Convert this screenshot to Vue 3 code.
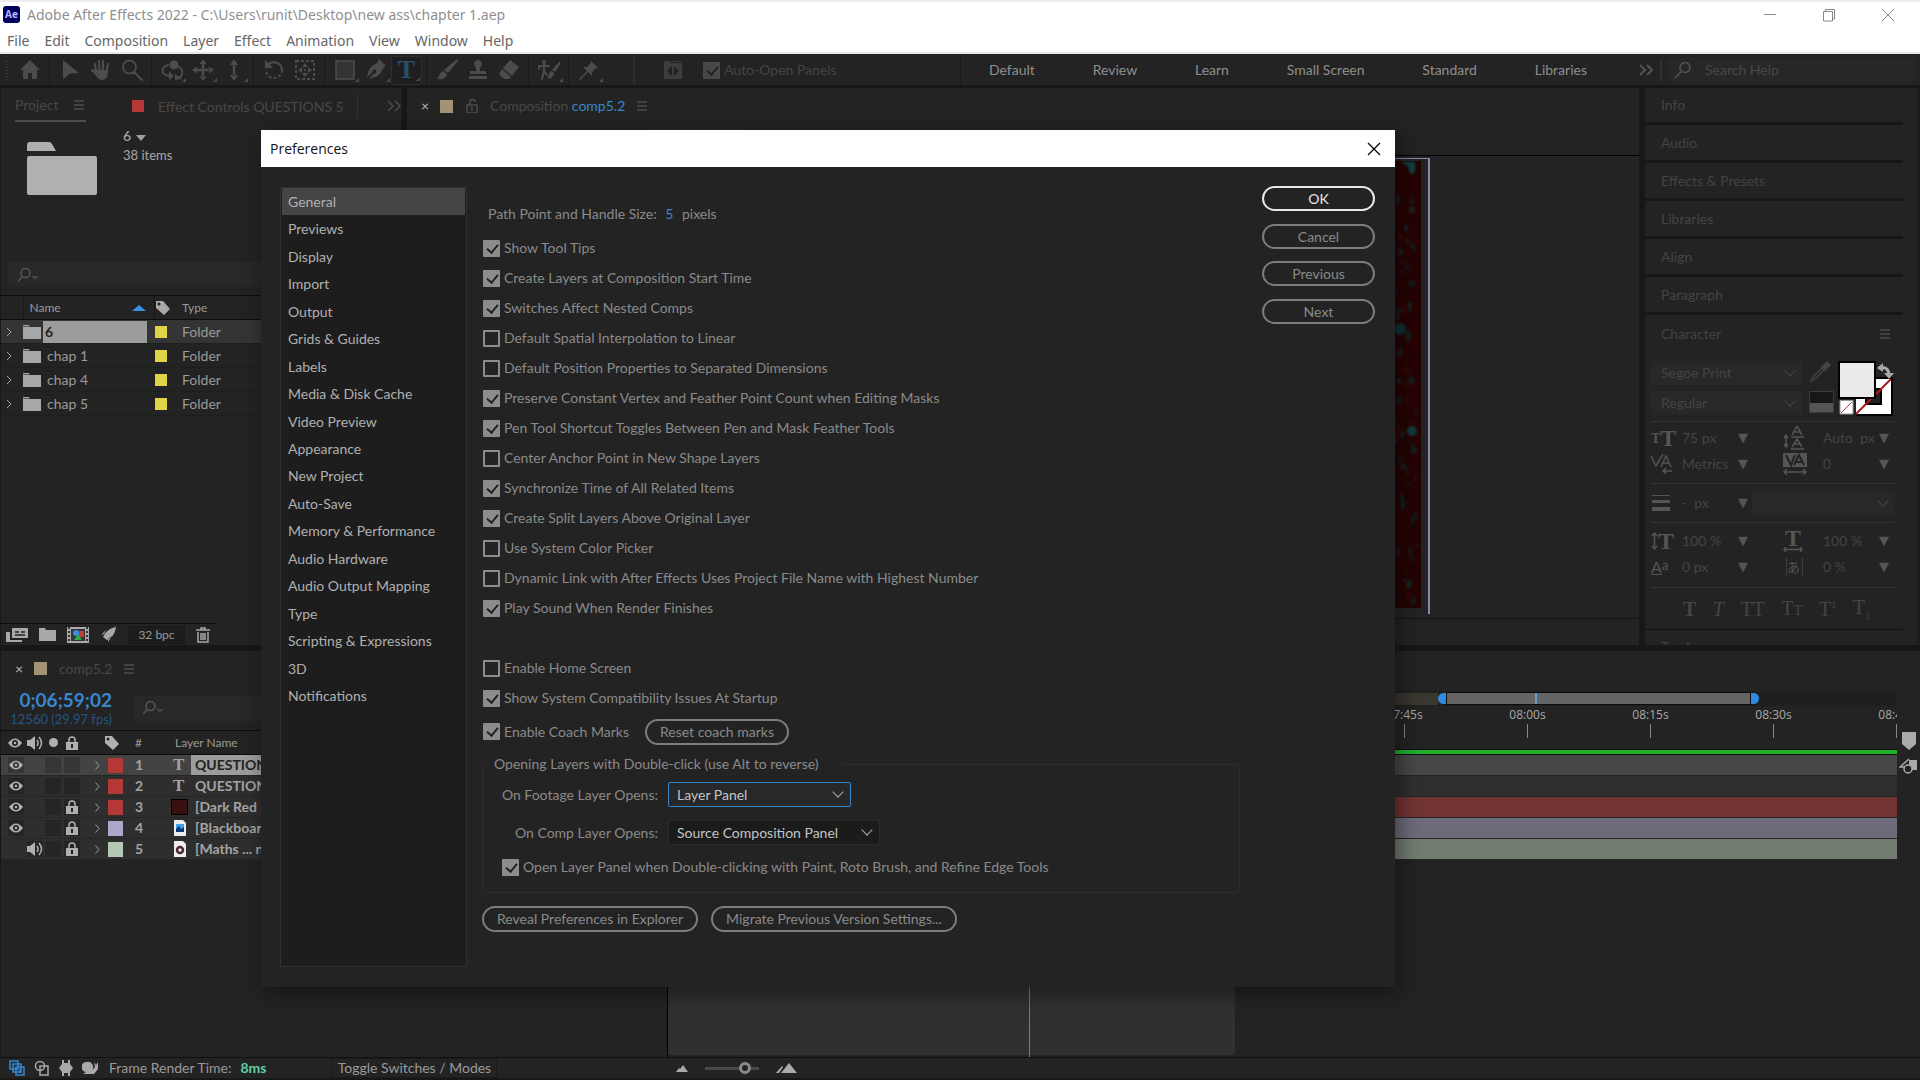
<script setup>
import { ref } from 'vue'

const menus = ['File', 'Edit', 'Composition', 'Layer', 'Effect', 'Animation', 'View', 'Window', 'Help']

const toolGroups = [
  [{ name: 'Home', f: 'M11 1L21 11H18V20H13V14H9V20H4V11H1Z' }],
  [
    { name: 'Selection', f: 'M4 1L20 14L11 14.5L4 20.5Z' },
    { name: 'Hand', f: 'M5 11H18V14C18 18 15.5 21 12 21C8.5 21 7 18 2.5 12L5 11Z', s: 'M6 13L5 5M9.5 12L9 2M13 12V2M16.5 13L18 5M2 11L7 16', w: 2.2 },
    { name: 'Zoom', s: 'M15 8A6.5 6.5 0 1 1 2 8A6.5 6.5 0 1 1 15 8M13 13L21 21', w: 1.8 },
  ],
  [
    { name: 'Orbit Camera', more: 1, f: 'M13 1.5A4.5 4.5 0 1 1 13 10.5A4.5 4.5 0 1 1 13 1.5M8 12L13 17L8 21ZM14 15L21 20L14 21Z', s: 'M7 6C0 8 0 14 5 16L9 17M18 8C23 11 22 16 18 19', w: 2 },
    { name: 'Pan Camera', more: 1, f: 'M11 0L14.5 5H7.5ZM11 22L14.5 17H7.5ZM0 11L5 7.5V14.5ZM22 11L17 7.5V14.5ZM9.8 4H12.2V18H9.8ZM4 9.8H18V12.2H4Z' },
    { name: 'Dolly Camera', more: 1, f: 'M11 0L15 6H7ZM11 22L15 16H7ZM9.8 5H12.2V17H9.8Z' },
  ],
  [
    { name: 'Rotation', f: 'M2 1V9H10Z', s: 'M5 6A8 8 0 0 1 19 11', w: 2.2, d: 'M19 11A8 8 0 1 1 3 11' },
    { name: 'Pan Behind', f: 'M11 4L14 8H8ZM11 18L14 14H8ZM4 11L8 8V14ZM18 11L14 8V14ZM10 10H12V12H10Z', d: 'M2 2H20V20H2Z' },
  ],
  [
    { name: 'Rectangle', more: 1, f: 'M2 2H20V20H2Z', box: 1 },
    { name: 'Pen', more: 1, f: 'M14 0L21 7L18 8L19 9L17 11C16 16 11 18 4 20L9 14.5A2 2 0 1 0 7.5 13L2 18.5C3 11 6 6 11 5L13 3Z' },
    { name: 'Type', more: 1, text: 'T' },
  ],
  [
    { name: 'Brush', f: 'M21 0L22 2L12 14L8 11ZM7 12L11 15C11 19 6 21 1 20C4 18 3 13 7 12Z' },
    { name: 'Clone Stamp', f: 'M11 1A4 4 0 0 1 14 7.5C12.5 9 13 11 13 12H19V15H3V12H9C9 11 9.5 9 8 7.5A4 4 0 0 1 11 1ZM2 17H20V20H2Z' },
    { name: 'Eraser', f: 'M12 1L21 8L14 17L5 9ZM4 10L13 18L11 20H6L1 15Z' },
  ],
  [{ name: 'Roto Brush', more: 1, f: 'M6 1A2 2 0 1 1 6 5A2 2 0 1 1 6 1M22 2L23 4L17 13L14 11ZM13 12L16 14C16 18 12 20 9 19C11 17 11 13 13 12Z', s: 'M6 5V12L4 20M6 12L9 16M1 10V7H11', w: 2 }],
  [{ name: 'Puppet Pin', more: 1, f: 'M13 2L20 9L17 10L14 13V17L10 13L2 21L1 20L9 12L5 8H9L12 5Z' }],
]

const workspaces = ['Default', 'Review', 'Learn', 'Small Screen', 'Standard', 'Libraries']
const panels = ['Info', 'Audio', 'Effects & Presets', 'Libraries', 'Align', 'Paragraph']
const folders = ['6', 'chap 1', 'chap 4', 'chap 5']

const layers = [
  { name: 'QUESTIONS 5', eye: 1, color: '#b63836', kind: 'T' },
  { name: 'QUESTIONS 4', eye: 1, color: '#b63836', kind: 'T' },
  { name: '[Dark Red Solid 1]', eye: 1, lock: 1, color: '#b63836', kind: 'solid' },
  { name: '[Blackboard.jpg]', eye: 1, lock: 1, color: '#aba8cb', kind: 'image' },
  { name: '[Maths ... n.mp3]', audio: 1, lock: 1, color: '#b4c9b5', kind: 'audio' },
]

const bars = ['#474747', '#2f2f2f', '#723333', '#6d6a7a', '#717b70']
const ticks = ['07:45s', '08:00s', '08:15s', '08:30s', '08:45s']

const categories = ['General', 'Previews', 'Display', 'Import', 'Output', 'Grids & Guides', 'Labels', 'Media & Disk Cache',
  'Video Preview', 'Appearance', 'New Project', 'Auto-Save', 'Memory & Performance', 'Audio Hardware',
  'Audio Output Mapping', 'Type', 'Scripting & Expressions', '3D', 'Notifications']
const current = ref('General')

const options = ref([
  { label: 'Show Tool Tips', on: true },
  { label: 'Create Layers at Composition Start Time', on: true },
  { label: 'Switches Affect Nested Comps', on: true },
  { label: 'Default Spatial Interpolation to Linear', on: false },
  { label: 'Default Position Properties to Separated Dimensions', on: false },
  { label: 'Preserve Constant Vertex and Feather Point Count when Editing Masks', on: true },
  { label: 'Pen Tool Shortcut Toggles Between Pen and Mask Feather Tools', on: true },
  { label: 'Center Anchor Point in New Shape Layers', on: false },
  { label: 'Synchronize Time of All Related Items', on: true },
  { label: 'Create Split Layers Above Original Layer', on: true },
  { label: 'Use System Color Picker', on: false },
  { label: 'Dynamic Link with After Effects Uses Project File Name with Highest Number', on: false },
  { label: 'Play Sound When Render Finishes', on: true },
])
const startup = ref([
  { label: 'Enable Home Screen', on: false },
  { label: 'Show System Compatibility Issues At Startup', on: true },
])
const coach = ref(true)
const openLayer = ref(true)
const autoOpen = ref(true)

// Mottled texture of the footage in the viewer
let seed = 7
const rnd = () => (seed = (seed * 16807) % 2147483647) / 2147483647
const specks = Array.from({ length: 130 }, () => ({
  x: Math.floor(rnd() * 29), y: Math.floor(rnd() * 440), w: 3 + Math.floor(rnd() * 4), h: 3 + Math.floor(rnd() * 7),
  c: ['#0d2f30', '#1c1414', '#102426', '#3a0808', '#0d3335', '#1a0505'][Math.floor(rnd() * 6)],
}))
</script>

<template>
  <div class="app">
    <header class="window-head">
      <div class="title">
        <span class="logo">Ae</span>
        <span class="title-text">Adobe After Effects 2022 - C:\Users\runit\Desktop\new ass\chapter 1.aep</span>
        <div class="win-buttons">
          <button aria-label="Minimize"><svg width="14" height="14" viewBox="0 0 14 14"><path d="M1 6.5H13" /></svg></button>
          <button aria-label="Restore"><svg width="14" height="14" viewBox="0 0 14 14"><path d="M1.5 3.5H10.5V13H1.5ZM3.500 3.500V1.5H12.5V11H10.5" /></svg></button>
          <button aria-label="Close"><svg width="14" height="14" viewBox="0 0 14 14"><path d="M1 1L13 13M13 1L1 13" /></svg></button>
        </div>
      </div>
      <nav class="menu"><a v-for="m in menus" :key="m" href="#">{{ m }}</a></nav>
    </header>

    <div class="toolbar">
      <div class="tools">
        <i class="grip"></i>
        <div v-for="(g, i) in toolGroups" :key="i" class="group">
          <button v-for="t in g" :key="t.name" :aria-label="t.name" :class="['tool', { more: t.more, active: t.text }]">
            <span v-if="t.text" class="tool-t">{{ t.text }}</span>
            <svg v-else width="22" height="22" viewBox="0 0 22 22">
              <path v-if="t.f" :d="t.f" :class="t.box ? 'boxed' : 'fill'" />
              <path v-if="t.s" :d="t.s" class="line" :stroke-width="t.w" />
              <path v-if="t.d" :d="t.d" class="dash" />
            </svg>
          </button>
        </div>
      </div>
      <div class="snap">
        <svg width="20" height="20" viewBox="0 0 20 20"><path d="M1 1H8V3H19V19H1Z" fill="#3d3d3d" /><path d="M9 6V16L4 11ZM11 6V16L16 11Z" fill="#222" /><path d="M10 1.5H18" stroke="#3d3d3d" /></svg>
        <label class="check dim"><input v-model="autoOpen" type="checkbox" />Auto-Open Panels</label>
      </div>
      <nav class="workspaces"><a v-for="w in workspaces" :key="w" href="#">{{ w }}</a></nav>
      <button class="chevs" aria-label="More workspaces"><svg width="14" height="12" viewBox="0 0 14 12"><path d="M1 1L6 6L1 11M8 1L13 6L8 11" /></svg></button>
      <div class="search-help">
        <svg width="18" height="18" viewBox="0 0 18 18"><path d="M16 6.5A5 5 0 1 1 6 6.5A5 5 0 1 1 16 6.5M7 11L1 17" /></svg>
        <input type="text" placeholder="Search Help" aria-label="Search Help" />
      </div>
    </div>

    <main class="workspace">
      <section class="project">
        <div class="tabs">
          <span class="tab on">Project <svg width="10" height="10" viewBox="0 0 10 10"><path d="M0 1H10M0 5H10M0 9H10" /></svg></span>
          <i class="sw red"></i>
          <span class="tab fx">Effect Controls QUESTIONS 5</span>
          <button class="chevs" aria-label="More tabs"><svg width="14" height="12" viewBox="0 0 14 12"><path d="M1 1L6 6L1 11M8 1L13 6L8 11" /></svg></button>
        </div>
        <div class="info">
          <svg width="70" height="54" viewBox="0 0 70 54"><path d="M0 9V3Q0 0 3 0H22Q24 0 25 2L29 9ZM2 14H68Q70 14 70 16V51Q70 53 68 53H2Q0 53 0 51V16Q0 14 2 14" fill="#b0b0b0" /></svg>
          <div class="info-text"><b>6</b> <i class="tri"></i><br /><span>38 items</span></div>
        </div>
        <div class="filter"><svg width="22" height="14" viewBox="0 0 22 14"><path d="M12 5A4.5 4.5 0 1 1 3 5A4.5 4.5 0 1 1 12 5M4.500 8.5L0 13" /><path d="M13 8H21L17 12Z" class="solid" /></svg><input type="text" aria-label="Filter project" /></div>
        <table class="items">
          <colgroup><col class="c1" /><col class="c2" /><col class="c3" /><col /></colgroup>
          <thead>
            <tr><th></th><th>Name<svg class="sort" width="14" height="6" viewBox="0 0 14 6"><path d="M0 6L7 0L14 6Z" fill="#3a8fe0" /></svg></th><th><svg width="15" height="15" viewBox="0 0 15 15"><path fill-rule="evenodd" d="M1 1H8L15 9L9 15L1 8ZM4 2.5A1.5 1.5 0 1 0 4 5.5A1.5 1.5 0 1 0 4 2.5" fill="#a8a8a8" /></svg></th><th>Type</th></tr>
          </thead>
          <tbody>
            <tr v-for="(f, i) in folders" :key="f" :class="{ sel: !i }">
              <td><svg width="6" height="10" viewBox="0 0 6 10"><path d="M1 1L5 5L1 9" fill="none" stroke="#a0a0a0" /></svg></td>
              <td><div class="cell"><svg width="18" height="14" viewBox="0 0 18 14"><path d="M0 0H6L7 2H18V14H0Z" fill="#a8a8a8" /><path d="M0 1.5H7" stroke="#232323" stroke-width=".6" /></svg><span class="fname">{{ f }}</span></div></td>
              <td><i class="sw yellow"></i></td>
              <td class="ftype">Folder</td>
            </tr>
          </tbody>
        </table>
        <div class="project-foot">
          <button aria-label="Interpret Footage"><svg width="22" height="16" viewBox="0 0 22 16"><path d="M6 1H22V11H6ZM0 5H4V13H16V15H0Z" fill="#a8a8a8" /><path d="M9 5H13M9 8H19M15 5H19" stroke="#232323" stroke-width="1.5" /></svg></button>
          <button aria-label="New Folder"><svg width="17" height="14" viewBox="0 0 17 14"><path d="M0 0H6L7 2H17V13H0Z" fill="#a8a8a8" /></svg></button>
          <button aria-label="New Composition"><svg width="22" height="16" viewBox="0 0 22 16"><path d="M0 0H22V16H0Z" fill="#a8a8a8" /><path d="M2 0V16M20 0V16" stroke="#333" stroke-width="2" stroke-dasharray="2 2" /><path d="M4 2H18V14H4Z" fill="#333" /><circle cx="9" cy="6" r="3" fill="#3a8fe0" /><path d="M12 4H17V10H12Z" fill="#c53a36" /><path d="M11 7L15 13H7Z" fill="#2fa848" /></svg></button>
          <button aria-label="Render"><svg width="17" height="16" viewBox="0 0 17 16"><path d="M16 0C10 1 6 4 3 10L7 13C13 10 15 6 16 0ZM6 3L1 8L4 7ZM12 9L8 15L8 12Z" fill="#a8a8a8" /></svg></button>
          <button class="bpc">32 bpc</button>
          <button aria-label="Delete"><svg width="14" height="16" viewBox="0 0 14 16"><path d="M0 3H14M5 3V1H9V3M2 5V15H12V5M5 6V13M7 6V13M9 6V13" fill="none" stroke="#a8a8a8" stroke-width="1.5" /></svg></button>
        </div>
      </section>

      <section class="comp">
        <div class="tabs comp-tabs">
          <button class="x" aria-label="Close tab">×</button>
          <i class="sw tan"></i>
          <svg class="lk" width="12" height="14" viewBox="0 0 12 14"><path d="M1 6H11V14H1Z" fill="#444" /><path d="M4 6V3A2.5 2.5 0 0 1 9 3" fill="none" stroke="#444" stroke-width="1.5" /><path d="M6 8V12" stroke="#222" stroke-width="2" /></svg>
          <span>Composition <a href="#">comp5.2</a></span>
          <svg width="10" height="10" viewBox="0 0 10 10"><path d="M0 1H10M0 5H10M0 9H10" /></svg>
        </div>
        <div class="crumb"></div>
        <div class="viewer">
          <div class="frame">
            <svg width="35" height="447" viewBox="0 0 35 447">
              <path d="M0 0H35V447H0Z" fill="#260303" />
              <g class="soft">
                <rect v-for="(s, i) in specks" :key="i" :x="s.x" :y="s.y" :width="s.w" :height="s.h" rx="1" :fill="s.c" opacity=".6" />
                <path d="M14 1H29V10L25 14L22 5Z" fill="#0d4446" /><circle cx="26" cy="270" r="5" fill="#0f4a4c" opacity=".8" /><circle cx="14" cy="168" r="6" fill="#0c3436" />
              </g>
            </svg>
          </div>
        </div>
      </section>

      <aside class="side">
        <button v-for="p in panels" :key="p" class="panel-head">{{ p }}</button>
        <div class="char-head">Character <svg width="10" height="10" viewBox="0 0 10 10"><path d="M0 1H10M0 5H10M0 9H10" /></svg></div>
        <div class="char">
          <div class="fonts">
            <div class="font-picks">
              <div class="pick"><select aria-label="Font family"><option>Segoe Print</option></select></div>
              <div class="pick"><select aria-label="Font style"><option>Regular</option></select></div>
            </div>
            <div class="minis">
              <svg width="22" height="22" viewBox="0 0 22 22"><path d="M14 6L16 8L6 18L2 20L4 16ZM12 5L17 10" fill="none" stroke="#444" stroke-width="1.5" /><path d="M13 5L18 0L22 4L17 9Z" fill="#444" /></svg>
              <svg width="25" height="22" viewBox="0 0 25 22"><path d="M.5.5H24.5V21.5H.5Z" fill="#171717" stroke="#3c3c3c" /><path d="M1 12H24V21H1Z" fill="#555" /></svg>
            </div>
            <svg class="swatches" width="56" height="56" viewBox="0 0 56 56">
              <path d="M17 17H54V54H17Z" fill="#fff" stroke="#000" stroke-width="2" /><path d="M28 28H43V43H28Z" fill="#222" stroke="#000" stroke-width="2" /><path d="M18 53L53 18" stroke="#a81c1c" stroke-width="2" />
              <path d="M0 37H18V56H0Z" fill="#222" /><path d="M2 39.5H15V53H2Z" fill="#fff" stroke="#999" /><path d="M3 52L14 41" stroke="#b33" />
              <path d="M1 1H37V37H1Z" fill="#eaeaea" stroke="#000" stroke-width="2" />
              <path d="M41 7Q50 5 51 13" fill="none" stroke="#a8a8a8" stroke-width="3" /><path d="M39 7L45 2V11ZM51 18L46 12H56Z" fill="#a8a8a8" />
            </svg>
          </div>
          <div class="metrics">
            <span class="gi serif"><small>T</small>T</span><input value="75 px" aria-label="Font size" /><button aria-label="Size list">▼</button>
            <span class="gi"><svg width="22" height="24" viewBox="0 0 22 24"><path d="M3 10V20M1 12L3 9L5 12M1 18L3 21L5 18M8 11H21M8 23H21M9 9L14 0L19 9M11 6H17M9 21L14 13L19 21M11 18H17" /></svg></span><input value="Auto  px" aria-label="Leading" /><button aria-label="Leading list">▼</button>
            <span class="gi"><svg width="22" height="20" viewBox="0 0 22 20"><path d="M0 2L5 12L12 0M10 13L15 2L20 13M12 9H18M12 17H21M15 14L12 17L15 20" /></svg></span><input value="Metrics" aria-label="Kerning" /><button aria-label="Kerning list">▼</button>
            <span class="gi"><svg width="24" height="22" viewBox="0 0 24 22"><path d="M0 0H24V14H0Z" class="solid" /><path d="M3 2L8 12L12 2M11 12L16 2L21 12M13 9H19" class="inv" /><path d="M1 19H23M4 16L1 19L4 22M20 16L23 19L20 22" /></svg></span><input value="0" aria-label="Tracking" /><button aria-label="Tracking list">▼</button>
          </div>
          <div class="metrics stroke-row">
            <span class="gi"><svg width="20" height="16" viewBox="0 0 20 16"><path d="M1 0H19V1H1ZM1 5H19V8H1ZM1 12H19V16H1Z" class="solid" /></svg></span><input value="-  px" aria-label="Stroke width" /><button aria-label="Stroke list">▼</button>
            <div class="pick wide"><select aria-label="Stroke order"><option></option></select></div>
          </div>
          <div class="metrics scale-rows">
            <span class="gi serif"><svg width="7" height="18" viewBox="0 0 7 18"><path d="M3.5 1V17M1 4L3.5 1L6 4M1 14L3.5 17L6 14" /></svg>T</span><input value="100 %" aria-label="Vertical scale" /><button aria-label="Vertical list">▼</button>
            <span class="gi serif wide-t">T<svg width="20" height="5" viewBox="0 0 20 5"><path d="M1 2.5H19M3 0L1 2.5L3 5M17 0L19 2.5L17 5" /></svg></span><input value="100 %" aria-label="Horizontal scale" /><button aria-label="Horizontal list">▼</button>
            <span class="gi"><u>A</u><small>a</small></span><input value="0 px" aria-label="Baseline shift" /><button aria-label="Baseline list">▼</button>
            <span class="gi jp">あ</span><input value="0 %" aria-label="Tsume" /><button aria-label="Tsume list">▼</button>
          </div>
          <div class="faux"><button><b>T</b></button><button><i>T</i></button><button>TT</button><button>T<small>T</small></button><button>T<sup>1</sup></button><button>T<sub>1</sub></button></div>
        </div>
        <div class="panel-head last">Tracker</div>
      </aside>
    </main>

    <section class="timeline">
      <div class="layers">
        <div class="tabs comp-tabs tl-tabs">
          <button class="x" aria-label="Close tab">×</button><i class="sw tan"></i><span>comp5.2</span>
          <svg width="10" height="10" viewBox="0 0 10 10"><path d="M0 1H10M0 5H10M0 9H10" /></svg>
        </div>
        <div class="time">
          <div class="tc"><b>0;06;59;02</b><small>12560 (29.97 fps)</small></div>
          <div class="filter"><svg width="22" height="14" viewBox="0 0 22 14"><path d="M12 5A4.5 4.5 0 1 1 3 5A4.5 4.5 0 1 1 12 5M4.500 8.5L0 13" /><path d="M13 8H21L17 12Z" class="solid" /></svg><input type="text" aria-label="Filter layers" /></div>
        </div>
        <table class="layer-table">
          <colgroup><col class="l1" /><col class="l2" /><col class="l3" /><col class="l4" /><col class="l5" /><col class="l6" /><col class="l7" /><col class="l8" /><col /></colgroup>
          <thead>
            <tr>
              <th><svg width="14" height="10" viewBox="0 0 14 10"><path fill-rule="evenodd" d="M0 5Q7-4 14 5Q7 14 0 5M7 2A3 3 0 1 0 7 8A3 3 0 1 0 7 2" fill="#b0b0b0" /><circle cx="7" cy="5" r="1.3" fill="#b0b0b0" /></svg></th>
              <th><svg width="16" height="14" viewBox="0 0 16 14"><path d="M0 4H3L8 0V14L3 10H0Z" fill="#b0b0b0" /><path d="M10 4Q12 7 10 10M12 1Q17 7 12 13" fill="none" stroke="#b0b0b0" stroke-width="1.5" /></svg></th>
              <th><i class="dot"></i></th>
              <th class="lock"><svg width="12" height="14" viewBox="0 0 12 14"><path d="M0 6H12V14H0Z" fill="#b0b0b0" /><path d="M3 6V4A3 3 0 0 1 9 4V6" fill="none" stroke="#b0b0b0" stroke-width="1.5" /><path d="M6 8V12" stroke="#222" stroke-width="2" /></svg></th>
              <th></th>
              <th><svg width="15" height="15" viewBox="0 0 15 15"><path fill-rule="evenodd" d="M1 1H8L15 9L9 15L1 8ZM4 2.5A1.5 1.5 0 1 0 4 5.5A1.5 1.5 0 1 0 4 2.5" fill="#b0b0b0" /></svg></th>
              <th>#</th><th colspan="2" class="ln">Layer Name</th>
            </tr>
          </thead>
          <tbody>
            <tr v-for="(l, i) in layers" :key="i" :class="{ sel: !i }">
              <td><span v-if="l.eye" class="slot"><svg width="14" height="10" viewBox="0 0 14 10"><path fill-rule="evenodd" d="M0 5Q7-4 14 5Q7 14 0 5M7 2A3 3 0 1 0 7 8A3 3 0 1 0 7 2" fill="#b0b0b0" /><circle cx="7" cy="5" r="1.3" fill="#b0b0b0" /></svg></span></td>
              <td><span v-if="l.audio" class="slot"><svg width="16" height="14" viewBox="0 0 16 14"><path d="M0 4H3L8 0V14L3 10H0Z" fill="#b0b0b0" /><path d="M10 4Q12 7 10 10M12 1Q17 7 12 13" fill="none" stroke="#b0b0b0" stroke-width="1.5" /></svg></span></td>
              <td><span class="slot"></span></td>
              <td><span class="slot"><svg v-if="l.lock" width="12" height="14" viewBox="0 0 12 14"><path d="M0 6H12V14H0Z" fill="#b0b0b0" /><path d="M3 6V4A3 3 0 0 1 9 4V6" fill="none" stroke="#b0b0b0" stroke-width="1.5" /><path d="M6 8V12" stroke="#222" stroke-width="2" /></svg></span></td>
              <td class="tw"><svg width="5" height="9" viewBox="0 0 5 9"><path d="M.5.5L4 4.5L.5 8.5" fill="none" stroke="#a0a0a0" /></svg></td>
              <td><i class="lab" :style="{ background: l.color }"></i></td>
              <td>{{ i + 1 }}</td>
              <td>
                <span v-if="l.kind === 'T'" class="kt">T</span>
                <i v-else-if="l.kind === 'solid'" class="solid-thumb"></i>
                <svg v-else width="12" height="16" viewBox="0 0 12 16"><path d="M0 0H9L12 3V16H0Z" fill="#eee" /><path v-if="l.kind === 'image'" d="M2 4H10V12H2Z" fill="#3aa0e8" /><path v-if="l.kind === 'image'" d="M2 12V9L5 6L7 9L10 7V12Z" fill="#0a3a78" /><circle v-if="l.kind === 'audio'" cx="6" cy="9" r="3" fill="none" stroke="#4a2a2e" stroke-width="2.5" /></svg>
              </td>
              <td><span class="lname">{{ l.name }}</span></td>
            </tr>
          </tbody>
        </table>
      </div>
      <div class="tracks">
        <div class="nav"><i class="cache"></i><i class="hl"></i><div class="range"><i></i></div><i class="hr"></i></div>
        <div class="ruler"><span v-for="t in ticks" :key="t">{{ t }}</span></div>
        <div class="green"></div>
        <i v-for="b in bars" :key="b" class="bar" :style="{ background: b }"></i>
        <div class="empty"></div>
        <i class="playhead"></i>
      </div>
      <div class="markers">
        <svg width="16" height="18" viewBox="0 0 16 18"><path d="M1 0H15V12L8 18L1 12Z" fill="#aaa" /></svg>
        <svg width="19" height="16" viewBox="0 0 19 16"><path d="M10 2H18V12H10Z" fill="#aaa" /><path d="M10 1L1 9H6" fill="none" stroke="#aaa" stroke-width="1.5" /><circle cx="9" cy="11" r="4" fill="#222" stroke="#aaa" stroke-width="1.5" /></svg>
      </div>
    </section>

    <footer class="status">
      <button aria-label="Layer switches"><svg width="16" height="16" viewBox="0 0 16 16"><path d="M1 1H9V9H1ZM4 4H12V12H4ZM7 7H15V15H7ZM11 9V13" fill="#1c2a38" stroke="#3a86cc" stroke-width="1.5" /></svg></button>
      <button aria-label="Transfer controls"><svg width="16" height="16" viewBox="0 0 16 16"><circle cx="6" cy="6" r="4.5" fill="none" stroke="#a8a8a8" stroke-width="1.5" /><path d="M6 6H14V15H6Z" fill="none" stroke="#a8a8a8" stroke-width="1.5" /></svg></button>
      <button aria-label="In and out"><svg width="14" height="16" viewBox="0 0 14 16"><path d="M3 0H5V3H9V0H11V4L14 8L11 12V16H9V13H5V16H3V12L0 8L3 4Z" fill="#a8a8a8" /></svg></button>
      <button aria-label="Render time"><svg width="17" height="14" viewBox="0 0 17 14"><path d="M5 1A5 5 0 0 1 10 9L13 6L12 1L14 4L16 1V8L12 13H1L4 11A5 5 0 0 1 5 1" fill="#a8a8a8" /></svg></button>
      <span>Frame Render Time:</span><b>8ms</b>
      <button class="toggle">Toggle Switches / Modes</button>
      <div class="zoomer">
        <svg width="12" height="7" viewBox="0 0 12 7"><path d="M0 7L3 3L4 4L7 0L12 7Z" fill="#aaa" /></svg>
        <input type="range" aria-label="Timeline zoom" value="80" />
        <svg width="21" height="10" viewBox="0 0 21 10"><path d="M0 10L6 3L7 4L3 10ZM5 10L13 0L21 10Z" fill="#aaa" /></svg>
      </div>
    </footer>

    <div class="dialog" role="dialog" aria-label="Preferences">
      <div class="dialog-title">Preferences <button aria-label="Close dialog"><svg width="14" height="14" viewBox="0 0 14 14"><path d="M1 1L13 13M13 1L1 13" /></svg></button></div>
      <div class="dialog-body">
        <div class="cats"><button v-for="c in categories" :key="c" :class="{ on: c === current }" @click="current = c">{{ c }}</button></div>
        <div class="prefs">
          <p class="path">Path Point and Handle Size: <a href="#">5</a> pixels</p>
          <label v-for="o in options" :key="o.label" class="check"><input v-model="o.on" type="checkbox" />{{ o.label }}</label>
          <div class="startup">
            <label v-for="o in startup" :key="o.label" class="check"><input v-model="o.on" type="checkbox" />{{ o.label }}</label>
          </div>
          <div class="coach"><label class="check"><input v-model="coach" type="checkbox" />Enable Coach Marks</label><button class="pill">Reset coach marks</button></div>
          <fieldset>
            <legend>Opening Layers with Double-click (use Alt to reverse)</legend>
            <div class="field"><label for="footage">On Footage Layer Opens:</label><div class="dd focus"><select id="footage"><option>Layer Panel</option></select></div></div>
            <div class="field"><label for="complayer">On Comp Layer Opens:</label><div class="dd"><select id="complayer"><option>Source Composition Panel</option></select></div></div>
            <label class="check"><input v-model="openLayer" type="checkbox" />Open Layer Panel when Double-clicking with Paint, Roto Brush, and Refine Edge Tools</label>
          </fieldset>
          <div class="bottom"><button class="pill">Reveal Preferences in Explorer</button><button class="pill">Migrate Previous Version Settings...</button></div>
        </div>
        <div class="actions"><button class="pill ok">OK</button><button class="pill">Cancel</button><button class="pill">Previous</button><button class="pill">Next</button></div>
      </div>
    </div>
  </div>
</template>

<style>
body { background: #232323; }
</style>

<style scoped>
* { box-sizing: border-box; }
.app { position: relative; display: flex; flex-direction: column; min-height: 100vh; overflow: hidden; background: #232323; color: #9a9a9a; font: 14px/18px Lato, "Noto Sans CJK JP", sans-serif; white-space: nowrap; }
button { padding: 0; border: 0; background: none; color: inherit; font: inherit; }
input, select { min-width: 0; border: 0; padding: 0; background: none; color: inherit; font: inherit; outline: 0; }
a { color: inherit; text-decoration: none; }
svg { display: block; flex: none; }
i { display: block; flex: none; font-style: normal; }

.window-head { height: 54px; border-top: 2px solid #ececec; border-bottom: 2px solid #e6e6e6; background: #fff; font-family: "Noto Sans", sans-serif; }
.title { display: flex; align-items: center; height: 25px; padding-left: 3px; color: #8f8f8f; }
.logo { width: 17px; height: 17px; margin-right: 7px; border-radius: 3px; background: #00005b; color: #b9b5ff; font: bold 10px/16px "Open Sans", sans-serif; text-align: center; }
.win-buttons { display: flex; gap: 45px; margin-left: auto; padding-right: 25px; }
.win-buttons path, .dialog-title path { fill: none; stroke: #888; }
.menu { display: flex; gap: 15px; align-items: center; height: 25px; padding: 2px 0 0 7px; color: #666; }

.toolbar { display: flex; align-items: center; height: 34px; padding-top: 1px; border-bottom: 3px solid #171717; }
.workspaces a { color: #8f8f8f; }
.tools { display: flex; width: 635px; height: 29px; padding-left: 5px; border-right: 2px solid #2d2d2d; }
.grip { width: 3px; height: 20px; margin: 5px 6px 0 0; background: repeating-linear-gradient(#333 0 1px, transparent 1px 3px); }
.group { display: flex; }
.group + .group { margin-left: 4px; padding-left: 4px; border-left: 1px solid #181818; }
.tool { position: relative; display: grid; place-items: center; width: 31px; height: 29px; }
.tool .fill { fill: #4c4c4c; }
.tool .boxed { fill: #343434; stroke: #4c4c4c; stroke-width: 1.5; }
.tool .line { fill: none; stroke: #4c4c4c; stroke-linecap: round; }
.tool .dash { fill: none; stroke: #4c4c4c; stroke-width: 2; stroke-dasharray: 3 2; }
.more::after { content: ""; position: absolute; right: 1px; bottom: 3px; border-bottom: 4px solid #4c4c4c; border-left: 4px solid transparent; }
.active { border: 1px solid #2d2d2d; border-radius: 2px; background: #1e1e1e; }
.tool-t { color: #27506e; font: bold 26px/26px "Liberation Serif", serif; }
.snap { display: flex; align-items: center; gap: 19px; width: 326px; height: 100%; padding-left: 28px; border-right: 1px solid #1b1b1b; }
.workspaces { display: flex; flex: 1; justify-content: space-between; padding: 0 52px 0 28px; }
.chevs path { fill: none; stroke: #555; stroke-width: 2; }
.search-help { display: flex; align-items: center; gap: 13px; width: 248px; height: 24px; margin: 0 5px 0 14px; padding-left: 7px; border-radius: 3px; background: #272727; box-shadow: -5px 0 0 #232323, -7px 0 0 #303030; }
.search-help path, .filter path { fill: none; stroke: #555; stroke-width: 1.5; }
.filter path.solid { fill: #444; stroke: none; }
::placeholder { color: #474747; opacity: 1; }

.check { display: flex; align-items: center; gap: 4px; height: 30px; }
.check input { position: relative; flex: none; width: 17px; height: 17px; margin: 0 0 0 1px; border: 2px solid #8c8c8c; border-radius: 1px; appearance: none; }
.check input:checked { background: #8c8c8c; }
.check input:checked::before { content: ""; position: absolute; left: 4px; top: 0; width: 5px; height: 9px; border: solid #202020; border-width: 0 2px 2px 0; transform: rotate(40deg); }
.dim { color: #444; }
.dim input { border-color: #484848; }
.dim input:checked { background: #484848; }

.workspace { display: grid; grid-template-columns: 402px minmax(0, 1fr) 275px; height: 563px; border-bottom: 6px solid #171717; }
.project, .comp, .side { min-width: 0; overflow: hidden; }
.project { display: flex; flex-direction: column; border-right: 1px solid #1c1c1c; border-left: 1px solid #171717; }
.tabs { display: flex; align-items: center; height: 36px; color: #484848; }
.tabs path, .char-head path { fill: none; stroke: #4c4c4c; stroke-width: 1.5; }
.tab.on { display: flex; align-items: center; gap: 16px; width: 71px; height: 32px; margin-left: 14px; border-bottom: 2px solid #4c4c4c; }
.sw { width: 12px; height: 12px; }
.red { margin-left: 46px; background: #b63836; }
.tan { width: 13px; height: 13px; background: #a39375; }
.yellow { background: #dfd34a; }
.fx { margin-left: 14px; padding-right: 13px; border-right: 1px solid #303030; line-height: 27px; }
.fx + .chevs { margin-left: 29px; }
.info { display: flex; gap: 26px; padding: 2px 0 0 26px; height: 138px; line-height: 19px; }
.info svg { margin-top: 16px; }
.info-text { font-size: 13px; color: #a8a8a8; }
.info-text b { font-size: 14px; font-weight: 500; }
.tri { display: inline-block; margin-left: 2px; border: 5px solid transparent; border-top: 6px solid #a0a0a0; border-bottom: 0; }
.filter { display: flex; align-items: center; height: 25px; padding-left: 10px; background: #282828; }
.project .filter { margin: 0 0 8px 7px; }
table { border-collapse: collapse; table-layout: fixed; width: 100%; }
th, td { padding: 0; font-weight: 400; text-align: left; vertical-align: middle; }
th { font-size: 12px; }
.items { border-top: 1px solid #0c0c0c; }
.items thead tr { height: 24px; border-bottom: 1px solid #0c0c0c; }
.c1 { width: 22px; }
.c2 { width: 131px; }
.c3 { width: 28px; }
.items th:first-child { border-right: 1px solid #171717; }
.items th:nth-child(2) { padding-left: 6px; border-right: 1px solid #171717; }
.items td:first-child svg { margin-left: 5px; }
.items .yellow, .items .ftype { margin-left: 1px; }
.sort { float: right; margin: 6px 8px 0 0; }
.items tbody tr { height: 24px; border-bottom: 1px solid #1e1e1e; }
.items .sel { background: #343434; }
.cell { display: flex; height: 22px; align-items: center; }
.fname { padding-left: 6px; }
.sel .fname { flex: 1; height: 22px; margin: 0 7px 0 2px; padding-left: 2px; background: #9c9c9c; color: #222; font-weight: bold; line-height: 22px; }
.project-foot { display: flex; align-items: center; gap: 11px; width: 216px; height: 22px; margin-top: auto; padding-left: 5px; border-top: 1px solid #0c0c0c; }
.bpc { width: 57px; height: 18px; background: #1d1d1d; border: 1px solid #191919; font-size: 12px; line-height: 16px; }

.comp { display: flex; flex-direction: column; border-left: 5px solid #171717; border-right: 6px solid #171717; }
.comp-tabs { padding-left: 14px; }
.comp-tabs .x { width: 8px; margin-right: 11px; color: #bbb; }
.comp-tabs span { margin-left: 12px; }
.comp-tabs a { color: #3a86cc; }
.comp-tabs > svg:last-child { margin-left: 12px; }
.lk { margin-left: 13px; }
.crumb { width: 94px; height: 26px; margin: 5px 0 0 241px; border-top: 2px solid #2c2c2c; }
.viewer { display: flex; justify-content: flex-end; height: 464px; padding: 2px 209px 0 0; border-top: 1px solid #000; border-bottom: 1px solid #141414; }
.frame { display: flex; justify-content: flex-end; width: 100%; height: 456px; padding: 2px 7px 0 0; border: solid #8c86ac; border-width: 1px 2px 0 0; }
.soft { filter: blur(1px); }

.side { display: flex; flex-direction: column; padding-right: 14px; border-right: 3px solid #1d1d1d; color: #444; }
.panel-head { flex: none; height: 38px; padding: 0 16px; border-bottom: 3px solid #171717; text-align: left; }
.panel-head:first-child { height: 37px; }
.last { height: 30px; padding-top: 8px; border: 0; }
.char-head { display: flex; flex: none; align-items: center; justify-content: space-between; height: 38px; padding: 0 13px 0 16px; }
.char { flex: none; padding: 0 9px 0 6px; border-bottom: 1px solid #111; }
.fonts { display: flex; height: 69px; padding-top: 8px; border-bottom: 1px solid #333; }
.font-picks { display: grid; gap: 6px; height: 54px; width: 154px; }
.pick { position: relative; height: 24px; border-radius: 2px; background: #282828; }
.pick select { width: 100%; height: 24px; padding-left: 10px; appearance: none; }
.pick::after, .dd::after { content: ""; position: absolute; right: 8px; top: 6px; width: 7px; height: 7px; border: solid #444; border-width: 0 1px 1px 0; transform: rotate(45deg); pointer-events: none; }
.minis { display: grid; gap: 8px; width: 25px; height: 54px; margin: 0 4px 0 7px; align-content: start; }
.metrics { display: grid; grid-template-columns: 31px 56px 45px 40px 56px 14px; grid-auto-rows: 26px; align-items: center; padding: 3px 0 6px; border-bottom: 1px solid #333; white-space: pre; }
.metrics > button { width: 14px; font: 13px/20px "DejaVu Sans", sans-serif; text-align: left; color: #555; }
.metrics input { width: 100%; }
.gi { display: flex; align-items: center; height: 24px; font-size: 16px; line-height: 24px; color: #555; }
.gi path { fill: none; stroke: #555; stroke-width: 1.5; }
.gi path.solid { fill: #555; stroke: none; }
.gi path.inv { stroke: #222; stroke-width: 2; }
.serif { font: bold 24px/22px "Liberation Serif", serif; }
.serif small { padding-top: 6px; font-size: 14px; }
.gi small { padding-bottom: 4px; }
.wide-t { flex-direction: column; width: 20px; line-height: 18px; }
.jp { margin: 0 20px 0 3px; border: 1px dotted #555; border-width: 0 1px; height: 16px; font-size: 13px; line-height: 16px; }
.stroke-row { padding: 6px 0; }
.stroke-row .wide { grid-column: 4 / 7; margin: 0 -2px 0 -31px; }
.scale-rows { padding: 5px 0 7px; }
.faux { display: flex; height: 41px; padding: 0 24px 0 32px; justify-content: space-between; align-items: center; font: 20px/22px "Liberation Serif", serif; }
.faux i { display: inline; font-style: italic; }
.faux small { font-size: 15px; }
.faux sup, .faux sub { font-size: 10px; line-height: 1; }

.timeline { position: relative; display: grid; grid-template-columns: 666px minmax(0, 1fr) 23px; flex: 1; min-height: 406px; border-left: 1px solid #171717; }
.tl-tabs { height: 35px; }
.time { display: flex; align-items: center; height: 44px; gap: 21px; }
.tc { display: flex; flex-direction: column; align-items: flex-end; width: 111px; }
.tc b { color: #3a86cc; font-size: 19px; line-height: 22px; }
.tc small { color: #245580; font-size: 13px; line-height: 16px; }
.time .filter { flex: 1; }
.layer-table { border-top: 1px solid #0c0c0c; }
.layer-table thead tr { height: 24px; border-bottom: 1px solid #0c0c0c; }
.l1 { width: 26px; } .l2 { width: 18px; } .l3 { width: 19px; } .l4 { width: 24px; } .l5 { width: 16px; }
.l6 { width: 31px; } .l7 { width: 36px; } .l8 { width: 20px; }
.layer-table tbody tr { height: 21px; background: #2e2e2e; border-bottom: 1px solid #252525; }
.layer-table tbody td { font-weight: bold; color: #a4a4a4; }
.layer-table td:first-child .slot, .layer-table th:first-child svg { margin-left: 7px; }
.layer-table .sel { background: #434343; }
.layer-table td:nth-child(8) svg { margin-left: 3px; }
.layer-table .ln { padding-left: 4px; }
.lock svg { margin-left: 2px; }
.slot { display: grid; place-items: center; width: 16px; height: 16px; background: #252525; }
.sel .slot { background: #363636; }
.dot { width: 9px; height: 9px; margin-left: 4px; border-radius: 50%; background: #b0b0b0; }
.tw svg { margin-left: 7px; }
.lab { width: 15px; height: 15px; margin-left: 4px; }
.kt { padding-left: 2px; font: bold 17px/18px "Liberation Serif", serif; }
.solid-thumb { width: 17px; height: 16px; border: 1px solid #000; background: #381011; }
.lname { display: block; height: 20px; padding-left: 4px; line-height: 20px; }
.sel .lname { width: 100px; background: #9c9c9c; color: #222; }

.tracks { position: relative; display: flex; flex-direction: column; border-left: 1px solid #000; padding-top: 40px; overflow: hidden; }
.nav { display: flex; align-items: center; justify-content: flex-end; height: 15px; padding-right: 138px; border-radius: 0 8px 0 0; background: #1f1f1f; }
.cache { width: 200px; height: 12px; background: #3a3630; }
.hl, .hr { width: 8px; height: 11px; border-radius: 6px 0 0 6px; background: #308be0; }
.hr { border-radius: 0 6px 6px 0; }
.range { width: 305px; height: 13px; border: 1px solid #0c0c0c; background: #646464; }
.range i { width: 2px; height: 11px; margin-left: 88px; background: #6b9cc4; }
.ruler { display: flex; justify-content: flex-end; height: 43px; margin-right: -61px; color: #aaa; font: 12px/18px "Open Sans", sans-serif; }
.ruler span { flex: none; width: 123px; text-align: center; }
.ruler span::after { content: ""; display: block; width: 1px; height: 14px; margin: 0 auto; background: #888; }
.green { height: 6px; border: solid #0c0c0c; border-width: 1px 0; background: #1fb02c; }
.bar { height: 21px; border-bottom: 1px solid #252525; }
.empty { flex: 1; width: 567px; margin-bottom: 2px; background: #303030; }
.playhead { position: absolute; top: 83px; bottom: 0; left: 361px; width: 1px; height: 100%; background: linear-gradient(transparent 140px, #3a86cc 140px); }
.markers { display: flex; flex-direction: column; gap: 8px; align-items: center; padding-top: 81px; }

.status { display: flex; align-items: center; height: 23px; padding-left: 9px; border-top: 1px solid #101010; border-bottom: 2px solid #171717; }
.status > button { margin-right: 9px; }
.status > span { margin-left: 1px; }
.status b { margin-left: 9px; color: #5fd0a4; }
.status .toggle { width: 166px; height: 20px; margin: 0 0 0 65px; border: 1px solid #1b1b1b; }
.zoomer { display: flex; align-items: center; gap: 17px; margin-left: 179px; }
.zoomer input { width: 54px; height: 14px; margin: 0; appearance: none; background: linear-gradient(#484848, #484848) center / 100% 3px no-repeat; }
.zoomer input::-webkit-slider-thumb { width: 12px; height: 12px; border: 3px solid #8a8a8a; border-radius: 50%; background: #232323; appearance: none; }

.dialog { position: absolute; top: 130px; left: 261px; width: 1134px; background: #232323; color: #8a8a8a; box-shadow: 4px 6px 20px rgba(0, 0, 0, .45); }
.dialog-title { display: flex; align-items: center; justify-content: space-between; height: 37px; padding: 0 14px 0 9px; background: #fff; color: #111; font-family: "Open Sans", sans-serif; }
.dialog-title path { stroke: #000; stroke-width: 1.2; }
.dialog-body { display: flex; align-items: flex-start; padding: 20px 20px 20px 19px; }
.cats { display: grid; grid-template: repeat(19, minmax(0, 1fr)) / 1fr; width: 187px; height: 780px; padding: 0 1px 256px; border: 1px solid #303030; background: #1d1d1d; color: #b0b0b0; }
.cats button { padding-left: 6px; text-align: left; }
.cats .on { background: #454545; }
.prefs { flex: 1; padding: 17px 0 0 15px; }
.path { margin: 0 0 10px; padding: 1px 0 0 6px; }
.path a { margin: 0 5px; color: #3a86cc; }
.startup { padding-top: 30px; }
.coach { display: flex; align-items: center; gap: 16px; height: 37px; }
.pill { height: 26px; padding: 0 13px; border: 2px solid #7c7c7c; border-radius: 13px; line-height: 20px; color: #8a8a8a; }
fieldset { width: 758px; height: 138px; margin: 5px 0 0; padding: 9px 17px 0; border: 1px solid #2d2d2d; border-radius: 2px; }
legend { margin-left: -13px; padding: 0 22px 0 7px; }
.field { display: flex; align-items: center; gap: 10px; height: 25px; margin-bottom: 13px; }
.field label { width: 158px; text-align: right; }
.dd { position: relative; width: 212px; height: 25px; border: 1px solid #2b2b2b; border-radius: 2px; background: #1b1b1b; color: #c4c4c4; }
.dd.focus { width: 183px; border-color: #3a86cc; background: #26282a; }
.dd select { width: 100%; height: 23px; padding-left: 8px; appearance: none; }
.dd::after { right: 8px; top: 5px; border-color: #aaa; }
fieldset .check { height: 18px; margin-left: 1px; }
.bottom { display: flex; gap: 13px; margin-top: 13px; }
.actions { display: grid; align-content: space-between; width: 113px; height: 138px; margin-top: -1px; }
.actions .pill { height: 25px; line-height: 19px; }
.pill.ok { border-color: #e8e8e8; color: #e8e8e8; }
</style>
